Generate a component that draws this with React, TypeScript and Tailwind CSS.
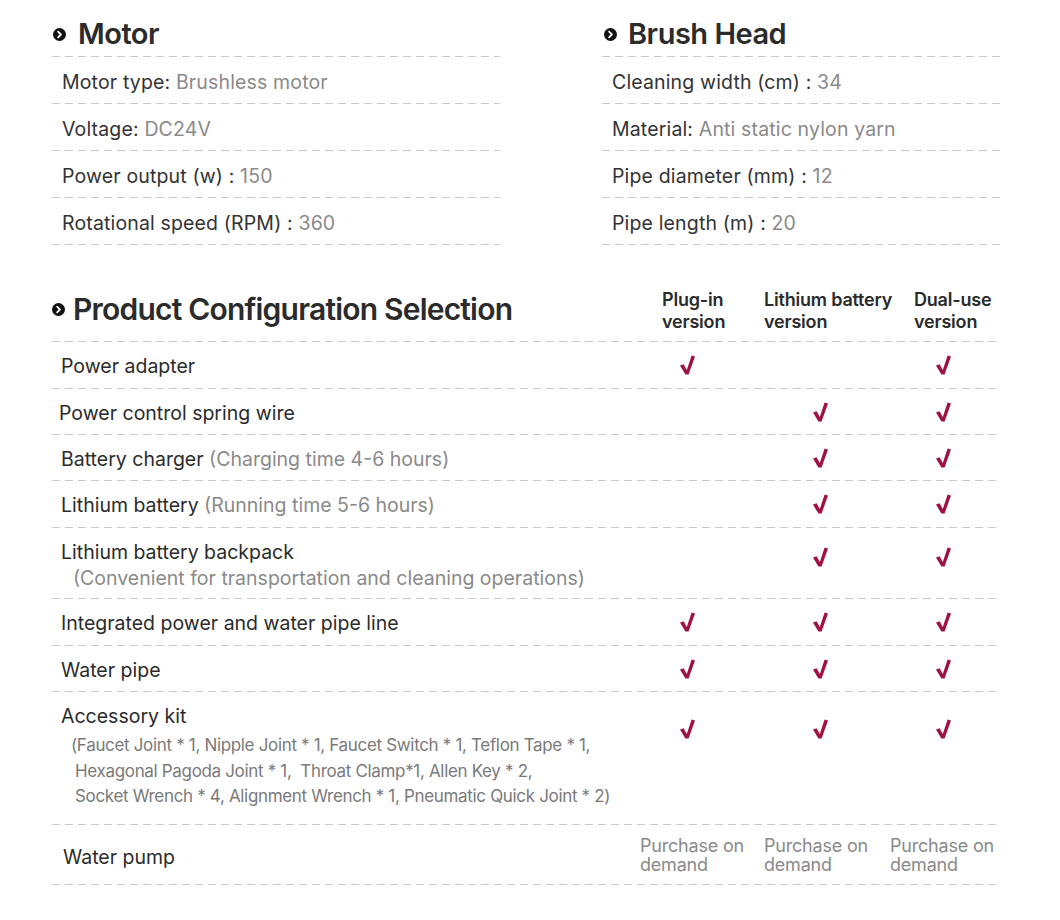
import React from "react";

const Dash = () => (
  <div className="h-px w-full bg-[linear-gradient(to_right,#c8c8c8_8px,transparent_8px)] bg-[length:13px_1px] bg-repeat-x" />
);

const Bullet = () => (
  <svg width="13" height="13" viewBox="0 0 13 13" className="shrink-0">
    <circle cx="6.5" cy="6.5" r="6.5" fill="#111" />
    <path d="M5.1 3.7 L7.9 6.5 L5.1 9.3" stroke="#fff" strokeWidth="1.8" fill="none" strokeLinecap="round" strokeLinejoin="round" />
  </svg>
);

const Check = () => (
  <svg width="15" height="20" viewBox="0 0 15 20">
    <polygon points="0,10.5 3.6,9.2 6.8,15 11.6,0.5 15,1.6 8.6,19.6 5.4,19.6" fill="#a0123f" />
  </svg>
);

const SpecRow = ({ k, v }: { k: string; v: string }) => (
  <>
    <div className="h-[46px] flex items-center pt-[6px] pl-[10px] text-[19.5px] tracking-[0.15px]">
      <span className="text-[#333]">{k}</span>
      <span className="text-[#8a8a8a]">&nbsp;{v}</span>
    </div>
    <Dash />
  </>
);

const SpecBlock = ({ title, rows, w, bulletMl, titleMl }: { title: string; rows: [string, string][]; w: string; bulletMl: string; titleMl: string }) => (
  <div className={w}>
    <div className="h-[44px] mt-[12px] flex items-center">
      <div className={bulletMl}><Bullet /></div>
      <div className={`${titleMl} text-[29px] font-semibold tracking-[-0.5px] text-[#2b2b2b]`}>{title}</div>
    </div>
    <Dash />
    {rows.map(([k, v]) => (
      <SpecRow key={k} k={k} v={v} />
    ))}
  </div>
);

type Row = {
  label: React.ReactNode;
  h: string;
  checks: [boolean, boolean, boolean];
  checkAlign?: string;
  labelAlign?: string;
  labelPl?: string;
};

const ColGrid = "grid grid-cols-[588px_122px_126px_112px]";

export default function App() {
  const rows: Row[] = [
    { label: <span>Power adapter</span>, h: "h-[46px]", checks: [true, false, true] },
    { label: <span>Power control spring wire</span>, h: "h-[45px]", checks: [false, true, true], labelPl: "pl-[7px]" },
    {
      label: (
        <span>
          Battery charger <span className="text-[#8a8a8a]">(Charging time 4-6 hours)</span>
        </span>
      ),
      h: "h-[45px]",
      checks: [false, true, true],
    },
    {
      label: (
        <span>
          Lithium battery <span className="text-[#8a8a8a]">(Running time 5-6 hours)</span>
        </span>
      ),
      h: "h-[46px]",
      checks: [false, true, true],
    },
    {
      label: (
        <div className="leading-[26px]">
          <div>Lithium battery backpack</div>
          <div className="pl-[12px] text-[#8a8a8a]">(Convenient for transportation and cleaning operations)</div>
        </div>
      ),
      h: "h-[70px]",
      checks: [false, true, true],
      checkAlign: "items-start pt-[19px]",
    },
    { label: <span>Integrated power and water pipe line</span>, h: "h-[46px]", checks: [true, true, true] },
    { label: <span>Water pipe</span>, h: "h-[45px]", checks: [true, true, true] },
    {
      label: (
        <div>
          <div className="leading-[26px]">Accessory kit</div>
          <div className="text-[17px] leading-[25.5px] text-[#7a7a7a] tracking-[-0.33px] mt-[4px]">
            <div className="pl-[10px]">(Faucet Joint * 1, Nipple Joint * 1, Faucet Switch * 1, Teflon Tape * 1,</div>
            <div className="pl-[14px]">Hexagonal Pagoda Joint * 1,&nbsp; Throat Clamp*1, Allen Key * 2,</div>
            <div className="pl-[14px]">Socket Wrench * 4, Alignment Wrench * 1, Pneumatic Quick Joint * 2)</div>
          </div>
        </div>
      ),
      h: "h-[132px]",
      checks: [true, true, true],
      checkAlign: "items-start pt-[27px]",
      labelAlign: "items-start pt-[11px]",
    },
  ];

  const checkPl = ["pl-[40px]", "pl-[51px]", "pl-[48px]"];
  const headCls = "mt-[4px] text-[18px] leading-[22px] font-semibold tracking-[-0.2px] text-[#2b2b2b] whitespace-nowrap";

  return (
    <div className="w-[1060px] h-[920px] bg-white font-['Inter','Noto_Sans',sans-serif] text-[#333]">
      <div className="pl-[52px] flex gap-[102px]">
        <SpecBlock
          title="Motor"
          w="w-[448px]"
          bulletMl="ml-[1px]"
          titleMl="ml-[12px]"
          rows={[
            ["Motor type:", "Brushless motor"],
            ["Voltage:", "DC24V"],
            ["Power output (w) :", "150"],
            ["Rotational speed (RPM) :", "360"],
          ]}
        />
        <SpecBlock
          title="Brush Head"
          w="w-[398px]"
          bulletMl="ml-[2px]"
          titleMl="ml-[11px]"
          rows={[
            ["Cleaning width (cm) :", "34"],
            ["Material:", "Anti static nylon yarn"],
            ["Pipe diameter (mm) :", "12"],
            ["Pipe length (m) :", "20"],
          ]}
        />
      </div>

      <div className="pl-[52px] mt-[34px] w-[1000px]">
        <div className={`${ColGrid} h-[62px] items-center pb-[2px]`}>
          <div className="flex items-center">
            <Bullet />
            <div className="ml-[8px] text-[30px] font-semibold tracking-[-0.8px] text-[#2b2b2b]">Product Configuration Selection</div>
          </div>
          <div className={`pl-[22px] ${headCls}`}>
            Plug-in<br />version
          </div>
          <div className={`pl-[2px] ${headCls}`}>
            Lithium battery<br />version
          </div>
          <div className={`pl-[26px] ${headCls}`}>
            Dual-use<br />version
          </div>
        </div>
        <Dash />
        {rows.map((r, i) => (
          <React.Fragment key={i}>
            <div className={`${ColGrid} ${r.h}`}>
              <div className={`flex ${r.labelAlign ?? "items-center pt-[4px]"} ${r.labelPl ?? "pl-[9px]"} text-[19.5px] tracking-[0px] text-[#2b2b2b]`}>{r.label}</div>
              {r.checks.map((c, j) => (
                <div key={j} className={`flex ${r.checkAlign ?? "items-center"} ${checkPl[j]}`}>
                  {c ? <Check /> : null}
                </div>
              ))}
            </div>
            <Dash />
          </React.Fragment>
        ))}
        <div className={`${ColGrid} h-[59px] items-center text-[#8a8a8a] text-[18px] leading-[19px] tracking-[-0.2px]`}>
          <div className="pl-[11px] text-[19.5px] tracking-[0px] text-[#2b2b2b] mt-[6px]">Water pump</div>
          <div className="whitespace-nowrap">Purchase on<br />demand</div>
          <div className="pl-[2px] whitespace-nowrap">Purchase on<br />demand</div>
          <div className="pl-[2px] whitespace-nowrap">Purchase on<br />demand</div>
        </div>
        <Dash />
      </div>
    </div>
  );
}
